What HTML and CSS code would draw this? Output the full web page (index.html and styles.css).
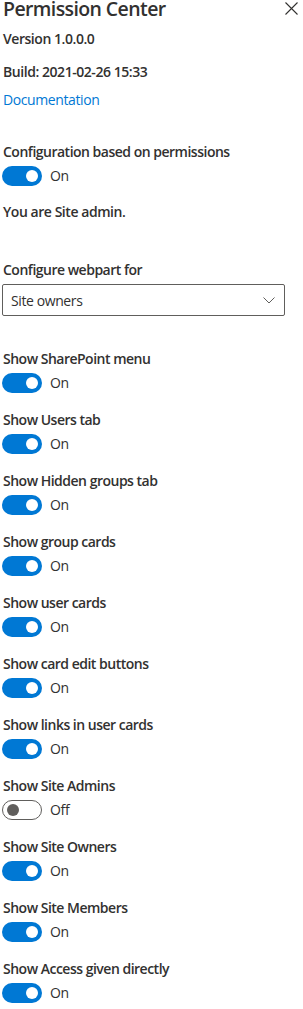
FILE: index.html
```html
<!DOCTYPE html>
<html lang="en">
<head>
<meta charset="utf-8">
<title>Permission Center</title>
<link rel="stylesheet" href="styles.css">
</head>
<body>
<div class="pane">
  <div class="header">
    <h1 class="title">Permission Center</h1>
    <button class="close" aria-label="Close">
      <svg width="13" height="13" viewBox="0 0 13 13"><path d="M0.5 0.5 L12.5 12.5 M12.5 0.5 L0.5 12.5" stroke="#323130" stroke-width="1.1" fill="none"/></svg>
    </button>
  </div>
  <div class="info version">Version 1.0.0.0</div>
  <div class="info build">Build: 2021-02-26 15:33</div>
  <a class="doc" href="#">Documentation</a>

  <div class="label first">Configuration based on permissions</div>
  <div class="toggle-row"><span class="toggle on"><span class="knob"></span></span><span class="state">On</span></div>

  <div class="info admin">You are Site admin.</div>

  <div class="label configure">Configure webpart for</div>
  <div class="dropdown">
    <span class="dd-text">Site owners</span>
    <svg class="chev" width="12" height="7" viewBox="0 0 12 7"><path d="M0.5 0.5 L6 6 L11.5 0.5" stroke="#605e5c" stroke-width="1" fill="none"/></svg>
  </div>

  <div class="label sp">Show SharePoint menu</div>
  <div class="toggle-row"><span class="toggle on"><span class="knob"></span></span><span class="state">On</span></div>

  <div class="label">Show Users tab</div>
  <div class="toggle-row"><span class="toggle on"><span class="knob"></span></span><span class="state">On</span></div>

  <div class="label">Show Hidden groups tab</div>
  <div class="toggle-row"><span class="toggle on"><span class="knob"></span></span><span class="state">On</span></div>

  <div class="label">Show group cards</div>
  <div class="toggle-row"><span class="toggle on"><span class="knob"></span></span><span class="state">On</span></div>

  <div class="label">Show user cards</div>
  <div class="toggle-row"><span class="toggle on"><span class="knob"></span></span><span class="state">On</span></div>

  <div class="label">Show card edit buttons</div>
  <div class="toggle-row"><span class="toggle on"><span class="knob"></span></span><span class="state">On</span></div>

  <div class="label">Show links in user cards</div>
  <div class="toggle-row"><span class="toggle on"><span class="knob"></span></span><span class="state">On</span></div>

  <div class="label">Show Site Admins</div>
  <div class="toggle-row"><span class="toggle off"><span class="knob"></span></span><span class="state">Off</span></div>

  <div class="label">Show Site Owners</div>
  <div class="toggle-row"><span class="toggle on"><span class="knob"></span></span><span class="state">On</span></div>

  <div class="label">Show Site Members</div>
  <div class="toggle-row"><span class="toggle on"><span class="knob"></span></span><span class="state">On</span></div>

  <div class="label">Show Access given directly</div>
  <div class="toggle-row"><span class="toggle on"><span class="knob"></span></span><span class="state">On</span></div>
</div>
</body>
</html>
```
FILE: styles.css
```css
html, body {
  margin: 0;
  padding: 0;
  background: #ffffff;
}
body {
  font-family: "Open Sans", "Noto Sans", sans-serif;
  color: #323130;
  font-size: 14px;
}
.pane {
  display: flex;
  flex-direction: column;
  align-items: flex-start;
  padding: 0 0 0 2px;
  width: 301px;
  box-sizing: border-box;
}
.header {
  display: flex;
  justify-content: space-between;
  align-items: flex-start;
  width: 100%;
  height: 18px;
}
.title {
  margin: 0 0 0 1px;
  font-size: 19.5px;
  font-weight: 600;
  line-height: 18px;
  letter-spacing: -0.6px;
}
.close {
  border: 0;
  background: none;
  padding: 0;
  margin: 2px 3px 0 0;
  width: 13px;
  height: 13px;
  display: block;
}
.close svg { display: block; }
.info {
  font-weight: 600;
  line-height: 20px;
  margin-left: 1px;
  letter-spacing: -0.45px;
}
.version { margin-top: 11px; }
.build { margin-top: 13px; }
.doc {
  margin-top: 8px;
  margin-left: 1px;
  line-height: 20px;
  color: #0078d4;
  text-decoration: none;
  letter-spacing: -0.4px;
}
.label {
  font-weight: 600;
  line-height: 20px;
  margin-top: 17px;
  margin-left: 1px;
  letter-spacing: -0.5px;
}
.label.first { margin-top: 32px; }
.label.configure { margin-top: 38px; }
.label.sp { margin-top: 33px; }
.admin { margin-top: 16px; }
.toggle-row {
  display: flex;
  align-items: center;
  gap: 8px;
  margin-top: 4px;
  height: 20px;
}
.toggle {
  width: 40px;
  height: 20px;
  box-sizing: border-box;
  border-radius: 10px;
  display: flex;
  align-items: center;
  padding: 0 4px;
}
.toggle.on {
  background: #0078d4;
  justify-content: flex-end;
}
.toggle.off {
  background: #ffffff;
  border: 1px solid #605e5c;
  justify-content: flex-start;
  padding: 0 3px 0 4px;
}
.knob {
  width: 12px;
  height: 12px;
  border-radius: 50%;
}
.on .knob { background: #ffffff; }
.off .knob { background: #605e5c; }
.state {
  line-height: 20px;
  letter-spacing: -0.3px;
}
.dropdown {
  margin-top: 4px;
  width: 283px;
  height: 32px;
  box-sizing: border-box;
  border: 1px solid #605e5c;
  border-radius: 2px;
  display: flex;
  align-items: center;
  justify-content: space-between;
  padding: 0 8px 0 8px;
}
.dd-text {
  letter-spacing: -0.4px;
}
.chev { display: block; margin-right: 1px; }
```
